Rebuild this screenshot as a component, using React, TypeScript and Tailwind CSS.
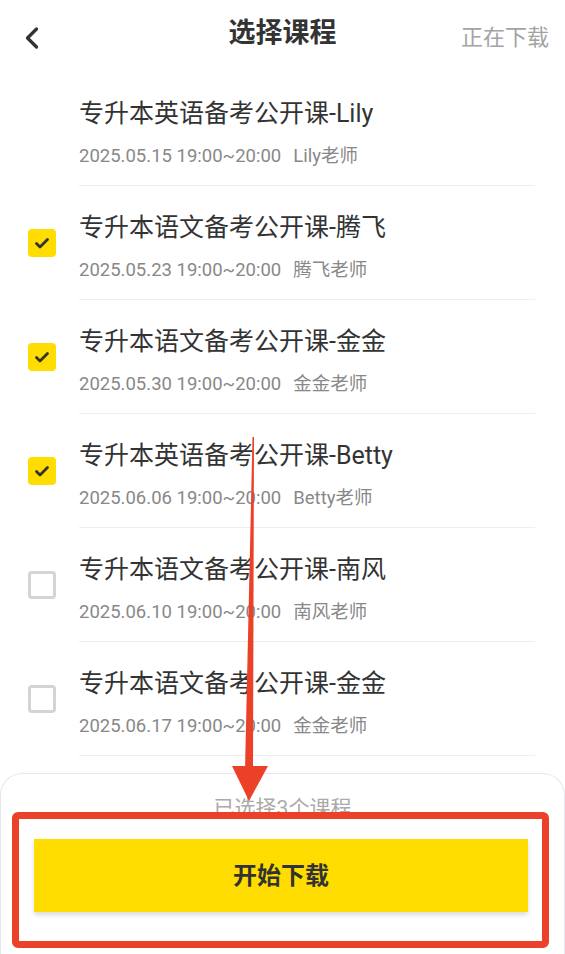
import { ChevronLeft } from "lucide-react"

type Course = {
  title: string
  time: string
  teacher: string
  state: "none" | "checked" | "unchecked"
}

const courses: Course[] = [
  { title: "专升本英语备考公开课-Lily", time: "2025.05.15 19:00~20:00", teacher: "Lily老师", state: "none" },
  { title: "专升本语文备考公开课-腾飞", time: "2025.05.23 19:00~20:00", teacher: "腾飞老师", state: "checked" },
  { title: "专升本语文备考公开课-金金", time: "2025.05.30 19:00~20:00", teacher: "金金老师", state: "checked" },
  { title: "专升本英语备考公开课-Betty", time: "2025.06.06 19:00~20:00", teacher: "Betty老师", state: "checked" },
  { title: "专升本语文备考公开课-南风", time: "2025.06.10 19:00~20:00", teacher: "南风老师", state: "unchecked" },
  { title: "专升本语文备考公开课-金金", time: "2025.06.17 19:00~20:00", teacher: "金金老师", state: "unchecked" },
  { title: "专升本英语备考公开课-Lily", time: "2025.06.24 19:00~20:00", teacher: "Lily老师", state: "unchecked" },
]

function Checkbox({ state }: { state: Course["state"] }) {
  if (state === "none") return null
  if (state === "checked") {
    return (
      <div className="absolute left-[28px] top-1/2 -translate-y-1/2 flex h-[28px] w-[28px] items-center justify-center rounded-[4px] bg-[#ffdd00]">
        <svg width="18" height="18" viewBox="0 0 18 18" fill="none">
          <path d="M3.5 9.5l3.5 3.5 7.5-7.5" stroke="#333" strokeWidth="2.8" strokeLinecap="round" strokeLinejoin="round" />
        </svg>
      </div>
    )
  }
  return (
    <div className="absolute left-[28px] top-1/2 -translate-y-1/2 h-[28px] w-[28px] rounded-[4px] border-[3px] border-[#d4d4d4]" />
  )
}

export default function App() {
  const selected = courses.filter((c) => c.state === "checked").length

  return (
    <div
      className="relative flex h-[954px] w-[565px] flex-col overflow-hidden bg-white"
      style={{ fontFamily: 'Roboto, "Noto Sans CJK SC", sans-serif' }}
    >
      {/* Header */}
      <div className="relative flex h-[72px] shrink-0 items-center justify-center pb-[6px]">
        <ChevronLeft className="absolute left-[14px] top-[20px] text-[#333]" size={36} strokeWidth={2.2} />
        <h1 className="text-[27px] font-bold text-[#333]">选择课程</h1>
        <span className="absolute right-[16px] top-[25px] text-[22px] leading-[26px] text-[#a3a3a3]">正在下载</span>
      </div>

      {/* Course list */}
      <div className="flex-1 overflow-hidden">
        {courses.map((c, i) => (
          <div key={i} className="relative pl-[79px] pr-[30px]">
            <Checkbox state={c.state} />
            <div className="border-b border-[#eeeeee] pt-[27px] pb-[17px]">
              <p className="text-[25px] leading-[30px] text-[#333]">{c.title}</p>
              <p className="mt-[15px] flex gap-[12px] text-[18.5px] leading-[24px] text-[#888]">
                <span>{c.time}</span>
                <span>{c.teacher}</span>
              </p>
            </div>
          </div>
        ))}
      </div>

      {/* Bottom panel */}
      <div className="h-[181px] shrink-0 rounded-t-[22px] border-[1.5px] border-b-0 border-[#e4e8ee] bg-white">
        <p className="pt-[21px] text-center text-[21px] leading-[26px] text-[#aaa]">已选择{selected}个课程</p>
        <div className="ml-[33px] mr-[36px] mt-[18px] flex h-[73px] items-center justify-center bg-[#ffdd00] shadow-[0_3px_5px_rgba(0,0,0,0.15)]">
          <span className="text-[24px] font-bold text-[#333]">开始下载</span>
        </div>
      </div>

      {/* Annotation: arrow */}
      <svg className="pointer-events-none absolute left-0 top-0" width="565" height="954" viewBox="0 0 565 954">
        <polygon points="252.5,437 254,437 253,770 245,770" fill="#ea4128" />
        <polygon points="232,766 268,766 249,801" fill="#ea4128" />
      </svg>

      {/* Annotation: box */}
      <div className="pointer-events-none absolute left-[12px] top-[812px] h-[136px] w-[537px] rounded-[6px] border-[7px] border-[#ea4128]" />
    </div>
  )
}
